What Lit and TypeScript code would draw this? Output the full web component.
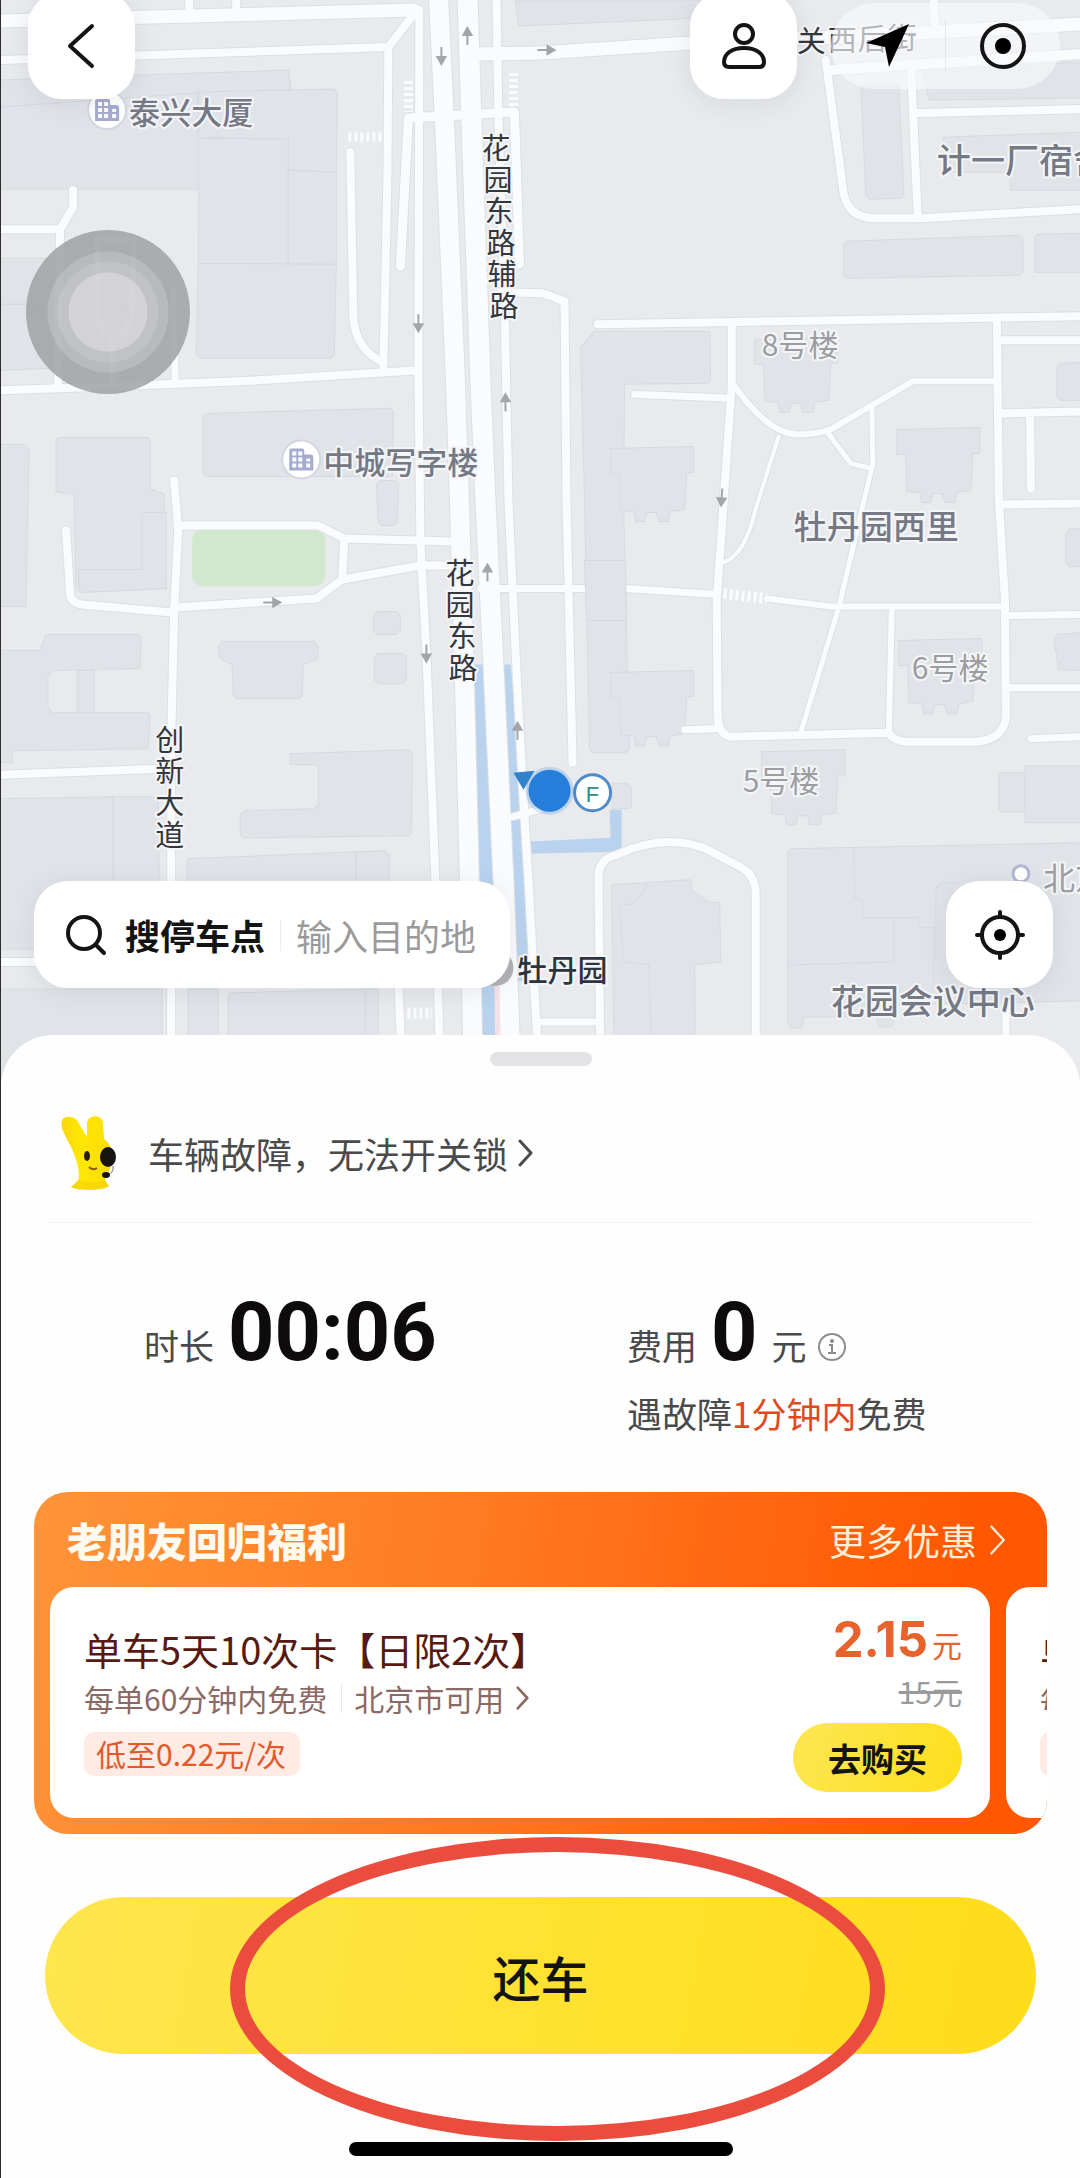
import { LitElement, css, html, svg } from 'lit'
import { customElement, property } from 'lit/decorators.js'

const TOWER = 'l83-2v26h-7l-2 37-14 2-2 10h-10l-2-9h-10l-2 9h-9l-2-10-13-1-1-37h-9z'

const buildings = [
  'M0 80L138 75L288 70L291 90L197 93L0 107z',
  'M0 107L197 93V189H0z',
  'M198 92L333 89L337 92L336 172L288 170V139L199 137z',
  'M199 138L288 139V264L198 263z',
  'M288 170L336 172V264H288z',
  'M198 263L336 264L334 354L331 358H200L196 354z',
  'M0 258H52V304H0z',
  'M0 304H52V368L0 370z',
  'M206 413L390 408L393 411L392 476H206L203 473V416z',
  'M0 444H24L29 449L26 606H0z',
  'M59 437H148L150 440V488L164 494L166 588L80 592L76 588L74 494L56 491V440z',
  'M166 512H142V569H78L80 592L166 588z',
  'M380 480H394L398 484L397 521L394 525H381L378 521L376 484z',
  'M0 650H40L46 634H138L141 638L140 668L52 670L48 675V706L52 712H148L150 716L148 748L12 750V762H0z',
  'M77 670H94V712H77z',
  'M222 641H314L318 646L317 658L303 664L302 695L299 698H236L233 695L232 664L220 658L218 646z',
  'M377 611H396L400 615V630L396 634H377L373 630V615z',
  'M377 653H402L406 657V679L402 683H378L374 679V657z',
  'M290 753L409 749L412 753L411 832L408 835L243 837L240 833V814L244 810L314 808L318 804V764H290z',
  'M0 798L113 796V948H0z',
  'M113 796H158L160 945H113z',
  'M187 858L356 851V945H187z',
  'M356 851L384 850L389 854L388 945H356z',
  'M0 988H162V1080H0z',
  'M188 988H218V1080H188z',
  'M230 992L365 988V1080H228V994z',
  'M365 988H378V1080H365z',
  'M515 0L518 26L700 18V0z',
  'M860 85H898L903 194L900 198L869 199L865 195z',
  'M922 70L1080 62V98L928 100z',
  'M942 137L1080 132V190H1010L1008 172H942z',
  'M846 241L1018 235L1022 238V272L1019 275L846 278L843 275V244z',
  'M1036 234L1080 233V272H1034V237z',
  'M580 347L594 331H709L710 379L707 383L624 384L623 500L625 590L627 680L629 748L625 752H592L589 748L584 500z',
  'M1060 363L1080 362V400H1060L1056 396V367z',
  'M1068 529L1080 528V566H1068L1065 562V533z',
  'M1056 634L1080 632V670L1058 669L1053 640z',
  'M998 772H1024V811H1000L998 808z',
  'M1024 765H1080V822H1024z',
  'M790 848L1080 842V1000L893 1004V1022L890 1026H878L876 1016H803L801 1027H790L787 1020V852z',
  'M611 884L690 879L691 889L708 901L719 902L720 961L694 964L695 1080H614z',
  'M612 783H626L631 787V806L628 808H612z',
  'M610 448' + TOWER,
  'M896 429' + TOWER,
  'M754 339' + TOWER,
  'M610 672' + TOWER,
  'M898 640' + TOWER,
  'M761 751' + TOWER,
]

const buildingLines = [
  'M853 848L854 898L862 899V917H917L918 926L933 927V985L930 990',
  'M787 964L893 961V918',
  'M646 882L642 893L632 903L619 904L623 961L648 964L652 1080',
  'M935 960V888L940 882H960',
]

// [path, width]
const roads: [string, number][] = [
  ['M189 0V14M236 0V12', 8],
  ['M0 21L413 10', 13],
  ['M0 60L388 47L412 16', 8],
  ['M388 48L387 180L383 370', 8],
  ['M0 390L60 388L240 381L418 370', 8],
  ['M350 152L353 318Q356 350 383 362', 8],
  ['M0 229H60L73 207V190M60 228L58 386', 8],
  ['M97 240H134L131 318Q125 338 113 338Q101 334 98 318zM113 338V384M173 288L175 380', 7],
  ['M419 10L418 370L420 540L426 653L435 880L440 1080', 8],
  ['M66 530L70 594Q71 602 82 604L172 612', 8],
  ['M174 480L178 530L174 610L171 740V1080', 8],
  ['M178 525H318L344 538L452 541M344 538L342 578', 8],
  ['M174 607L316 598L342 579L420 565H455', 8],
  ['M0 774L160 768M0 961H44', 8],
  ['M398 980L402 1080', 8],
  ['M470 54L540 53L690 43L860 36L1080 24', 13],
  ['M830 70L1080 54', 10],
  ['M825 60L833 120L843 194Q848 217 872 218L920 218L1080 209', 8],
  ['M910 65L917 218M917 113L1080 109', 8],
  ['M933 0L934 28', 8],
  ['M597 324L1080 316', 8],
  ['M500 292L542 293L564 301L566 500L572 762', 8],
  ['M731 326V385L721 530L716 600L717 716Q718 734 730 736L888 732Q892 740 905 741L976 741Q1004 738 1005 715L1004 600L998 500L996 320', 8],
  ['M734 386Q768 434 798 434Q815 434 830 429L912 381H994', 6],
  ['M778 436L755 508Q744 556 722 562', 4],
  ['M826 431L850 463L870 468M871 405L872 463L838 607L800 732', 5],
  ['M634 394L729 398', 7],
  ['M480 588L584 588M625 588L716 594', 7],
  ['M766 598L830 606H1002M891 607L888 732', 6],
  ['M684 729L716 728', 7],
  ['M1000 340H1080M1000 413L1080 411M1029 413L1030 488M1002 504L1080 503', 8],
  ['M1006 615L1080 614M1006 687H1080M1030 738L1080 736', 7],
  ['M600 1080L598 876Q598 858 616 854Q664 832 705 848L743 868Q755 876 755 893V1080', 8],
  ['M540 1021H600M1005 1005V1080', 7],
  ['M438 -5L444 120L455 380L459 500L464 680L469 880L473 1080', 19],
  ['M467 -5L471 120L480 380L485 500L493 665L503 880L511 1080', 20],
  ['M496 -5L498 120L504 300L508 500L515 650L523 800L528 880L539 1080', 8],
  ['M512 816L545 807', 7],
  ['M400 266L408 118L514 112L519 264', 9],
]

const arrows = [
  [467, 36, 0],
  [441, 56, 180],
  [546, 50, 90],
  [418, 323, 180],
  [505, 402, 0],
  [487, 572, 0],
  [426, 653, 180],
  [517, 730, 0],
  [272, 602, 90],
  [721, 497, 184],
]

const officePin = (x: number, y: number) => svg`
  <g transform="translate(${x} ${y})">
    <circle r="19" class="pin" />
    <path fill="#a6abd0" d="M-12 11V-9Q-12-11-10-11H1Q3-11 3-9V-5H9Q12-5 12-2V11z" />
    <path fill="#fff" d="M-9-8h4v4h-4zM-3-8h4v4h-4zM-9-2h4v4h-4zM-3-2h4v4h-4zM-9 4h4v4h-4zM-3 4h4v4h-4zM5-1h4v3h-4zM5 4h4v4h-4z" />
  </g>
`

const chevron = (size: number, width: number) => html`
  <svg width=${size / 2} height=${size} viewBox="0 0 15 30" aria-hidden="true">
    <path
      d="M2 3L13 15L2 27"
      fill="none"
      stroke="currentColor"
      stroke-width=${width}
      stroke-linecap="round"
      stroke-linejoin="round"
    />
  </svg>
`

@customElement('street-map')
export class StreetMap extends LitElement {
  render() {
    return html`
      <svg class="map" viewBox="0 0 1080 1080" preserveAspectRatio="xMidYMin slice">
        ${buildings.map((d) => svg`<path class="building" d=${d} />`)}
        ${buildingLines.map((d) => svg`<path class="edge" d=${d} />`)}
        <rect class="park" x="192" y="528" width="133" height="58" rx="12" />

        <path class="line" d="M474 664H486L500 880V1080H482L479 880L474 690z" />
        <path class="line" d="M500 664H510L514 700L521 770L526 900L530 980H512z" />
        <path class="line" d="M524 841L610 837L609 809H621V851L524 853z" />

        ${roads.map(([d, w]) => svg`<path class="casing" d=${d} stroke-width=${w + 2} />`)}
        ${roads.map(([d, w]) => svg`<path class="road" d=${d} stroke-width=${w} />`)}
        <path class="building" d="M584 560L625 560L626 620H586z" stroke="none" />
        <path class="steps" d="M408 81V112M513 73V106M348 137H386" />
        <path class="steps wide" d="M723 593L766 598M407 1012H432" />
        <path fill="#f5e1e8" d="M494 985H499L501 1080H495z" />

        ${arrows.map(
          ([x, y, r]) => svg`
            <path class="arrow" transform="translate(${x} ${y}) rotate(${r})" d="M0 9V-3M-4-1L0-8L4-1z" />
          `,
        )}

        ${officePin(107, 110)} ${officePin(301, 459)}
        <circle cx="495" cy="967" r="18" fill="#b3b3b5" />
        <circle cx="1020" cy="873" r="8" fill="#fff" stroke="#b3b7d4" stroke-width="3" />

        <text class="place" font-size="31" x="129" y="124">泰兴大厦</text>
        <text class="place" font-size="31" x="323" y="474">中城写字楼</text>
        <text class="place" font-size="33" x="793" y="539">牡丹园西里</text>
        <text class="place" font-size="34" x="936" y="173">计一厂宿舍</text>
        <text class="place" font-size="34" x="830" y="1013">花园会议中心</text>
        <text class="minor" font-size="30" x="761" y="356">8号楼</text>
        <text class="minor" font-size="30" x="742" y="791">5号楼</text>
        <text class="minor" font-size="30" x="911" y="678">6号楼</text>
        <text class="minor" font-size="32" x="1042" y="889">北京</text>
        <text class="station" font-size="30" x="517" y="980">牡丹园</text>
        <text class="street" font-size="29" x="796 827 857 887" y="52 51 50 49">关西后街</text>
        <text class="street" font-size="29" x="481 483 484 486 487 489" y="159 191 222 254 285 317">花园东路辅路</text>
        <text class="street" font-size="29" x="445 445 447 448" y="583 615 646 678">花园东路</text>
        <text class="street" font-size="29" x="155 155 155 155" y="750 781 813 845">创新大道</text>

        <circle cx="549" cy="790" r="24" fill="#1d7fe0" opacity="0.2" />
        <path fill="#3182cb" d="M513 772L534 770L523 789z" />
        <circle cx="549" cy="790" r="21" fill="#257fda" />
        <circle cx="592" cy="792" r="18" fill="#fff" stroke="#4f8bc9" stroke-width="3" />
        <text class="exit" x="592" y="801" font-size="22">F</text>
      </svg>
    `
  }

  static get styles() {
    return css`
      :host {
        display: block;
        background: #e8eaed;
      }
      .map {
        display: block;
        width: 100%;
        height: 100%;
      }
      text {
        font-family: 'Noto Sans CJK SC', sans-serif;
        paint-order: stroke;
        stroke: #f4f5f7;
        stroke-width: 4px;
        stroke-linejoin: round;
      }
      .building {
        fill: #e0e4e9;
        stroke: #d6dae0;
      }
      .edge {
        fill: none;
        stroke: #d6dae0;
      }
      .park {
        fill: #d1e8ce;
      }
      .casing,
      .road {
        fill: none;
        stroke-linejoin: round;
        stroke-linecap: round;
      }
      .casing {
        stroke: #dcdfe3;
      }
      .road {
        stroke: #fafbfd;
      }
      .steps {
        fill: none;
        stroke: #fafbfd;
        stroke-width: 9px;
        stroke-dasharray: 3 3;
      }
      .wide {
        stroke-width: 11px;
      }
      .line {
        fill: #b9d2ee;
      }
      .arrow {
        fill: #a3a5a8;
        stroke: #a3a5a8;
        stroke-width: 2px;
      }
      .pin {
        fill: #fff;
        stroke: #d3d6e2;
        stroke-width: 2px;
      }
      .place {
        fill: #747985;
        font-weight: 500;
      }
      .minor {
        fill: #9b9da2;
      }
      .station {
        fill: #2c3440;
        font-weight: 500;
      }
      .street {
        fill: #34373c;
      }
      .exit {
        fill: #2b8f8c;
        stroke: none;
        font-family: 'Liberation Sans', sans-serif;
        text-anchor: middle;
      }
    `
  }
}

@customElement('coupon-card')
export class CouponCard extends LitElement {
  @property() name = ''
  @property() rule = ''
  @property() area = ''
  @property() tag = ''
  @property() price = ''
  @property() origin = ''

  render() {
    return html`
      <div class="info">
        <div class="name">${this.name}</div>
        <div class="rule">
          <span>${this.rule}</span>
          ${this.area ? html`<a class="area" href="#area">${this.area}${chevron(26, 3)}</a>` : ''}
        </div>
        <div class="tag">${this.tag}</div>
      </div>
      ${this.price
        ? html`
            <div class="buy">
              <div class="price"><b>${this.price}</b>元</div>
              <s class="origin">${this.origin}元</s>
              <button class="button">去购买</button>
            </div>
          `
        : ''}
    `
  }

  static get styles() {
    return css`
      :host {
        display: flex;
        justify-content: space-between;
        box-sizing: border-box;
        min-height: 231px;
        padding: 29px 28px 26px 34px;
        border-radius: 24px;
        background: #fff;
        white-space: nowrap;
        font-size: 30px;
      }
      .info {
        display: flex;
        flex-direction: column;
        align-items: flex-start;
        padding-top: 8px;
      }
      .name {
        color: #561a12;
        font-size: 38px;
        line-height: 50px;
      }
      .rule {
        display: flex;
        align-items: center;
        margin-top: 4px;
        color: #8b6a63;
        line-height: 40px;
      }
      .area {
        display: flex;
        align-items: center;
        gap: 12px;
        margin-left: 14px;
        padding-left: 12px;
        border-left: 1px solid #ece6e4;
        color: inherit;
        line-height: 30px;
        text-decoration: none;
      }
      .tag {
        box-sizing: border-box;
        min-width: 28px;
        height: 44px;
        margin-top: 14px;
        padding: 0 14px 0 12px;
        border-radius: 10px;
        background: #ffeae4;
        color: #e05a2b;
        line-height: 42px;
      }
      .buy {
        display: flex;
        flex-direction: column;
        align-items: flex-end;
      }
      .price {
        height: 48px;
        color: #e8622b;
        line-height: 48px;
      }
      .price b {
        margin-right: 4px;
        font-family: Inter, sans-serif;
        font-size: 49px;
      }
      .origin {
        margin-top: 7px;
        color: #9a9a9a;
        line-height: 40px;
      }
      .button {
        height: 69px;
        margin-top: 12px;
        padding: 0 35px;
        border: none;
        border-radius: 35px;
        background: linear-gradient(110deg, #fde653, #fedf1c);
        color: #141414;
        font-family: inherit;
        font-weight: 700;
        font-size: 33px;
        line-height: 66px;
      }
    `
  }
}

@customElement('app-root')
export class AppRoot extends LitElement {
  render() {
    return html`
      <section class="area">
        <street-map class="canvas"></street-map>
        <div class="touch"></div>
        <div class="bar">
          <button class="square" aria-label="返回">
            <svg width="54" height="54" viewBox="0 0 54 54">
              <path class="stroke" stroke-width="5" d="M37 7L15 27L37 47" />
            </svg>
          </button>
          <div class="tools">
            <button class="square" aria-label="我的">
              <svg width="54" height="54" viewBox="0 0 54 54">
                <circle class="stroke" cx="27" cy="15" r="9" />
                <path
                  class="stroke"
                  d="M27 29C38 29 47 34 47 43Q47 48 42 48H12Q7 48 7 43C7 34 16 29 27 29z"
                />
              </svg>
            </button>
            <div class="capsule">
              <button class="plain" aria-label="导航">
                <svg width="54" height="54" viewBox="0 0 54 54">
                  <path d="M48 5L28 48L24 28L5 24z" />
                </svg>
              </button>
              <button class="plain" aria-label="关闭">
                <svg width="54" height="54" viewBox="0 0 54 54">
                  <circle class="stroke" cx="27" cy="27" r="21" />
                  <circle cx="27" cy="27" r="8" />
                </svg>
              </button>
            </div>
          </div>
        </div>
        <div class="bar">
          <div class="search">
            <button class="spot">
              <svg width="42" height="42" viewBox="0 0 42 42" aria-hidden="true">
                <circle class="stroke" cx="19" cy="19" r="16" />
                <path class="stroke" d="M31 31L39 39" />
              </svg>
              搜停车点
            </button>
            <span class="split"></span>
            <input class="input" aria-label="输入目的地" placeholder="输入目的地" />
          </div>
          <button class="square" aria-label="定位">
            <svg width="54" height="54" viewBox="0 0 54 54">
              <circle class="stroke" cx="27" cy="27" r="18" />
              <circle cx="27" cy="27" r="6" />
              <path class="stroke" d="M27 4V9M27 45V50M4 27H9M45 27H50" />
            </svg>
          </button>
        </div>
      </section>

      <section class="sheet">
        <div class="handle"></div>

        <a class="support" href="#support">
          <svg width="56" height="76" viewBox="0 0 56 76" aria-hidden="true">
            <defs>
              <linearGradient id="skin" x1="0" x2="1">
                <stop offset="0" stop-color="#f8d80c" />
                <stop offset="0.4" stop-color="#ffe704" />
                <stop offset="1" stop-color="#fbdc08" />
              </linearGradient>
            </defs>
            <path
              fill="url(#skin)"
              d="M2 13C0 5 4 1 10 2C16 2 18 6 21 12L27 22L27 8C28-1 43-1 43 9L44 24C51 29 53 37 52 45C51 55 46 60 45 65L49 71C42 76 18 76 11 72C15 68 19 67 19 62C19 53 17 46 12 34C8 25 4 20 2 13z"
            />
            <path fill="#f4cc06" opacity="0.5" d="M18 65Q31 69 45 66L49 71C42 76 18 76 11 72z" />
            <ellipse cx="27" cy="41" rx="3" ry="5" fill="#2b1d05" />
            <ellipse cx="48" cy="42" rx="8" ry="10" fill="#171412" />
            <path d="M29 52Q33 56 37 53" fill="none" stroke="#8a5a00" stroke-width="2" />
            <path d="M53 51Q54 59 46 60" fill="none" stroke="#77756c" stroke-width="1" />
            <ellipse cx="46" cy="60" rx="4" ry="3" fill="#171412" />
          </svg>
          <span class="question">车辆故障，无法开关锁</span>
          ${chevron(30, 3)}
        </a>

        <div class="stats">
          <div class="stat">时长<b class="number">00:06</b></div>
          <div>
            <div class="stat">
              费用<b class="number">0</b>元
              <svg class="tip" width="30" height="30" viewBox="0 0 30 30" aria-hidden="true">
                <circle cx="15" cy="15" r="13" fill="none" stroke="currentColor" stroke-width="2" />
                <path d="M12 13H15V21M11 21H19" fill="none" stroke="currentColor" stroke-width="2" />
                <circle cx="15" cy="9" r="2" fill="currentColor" />
              </svg>
            </div>
            <div class="note">遇故障<em>1分钟内</em>免费</div>
          </div>
        </div>

        <div class="promo">
          <div class="head">
            <h2 class="title">老朋友回归福利</h2>
            <a class="more" href="#more">更多优惠${chevron(34, 2)}</a>
          </div>
          <div class="coupons">
            <coupon-card
              class="coupon"
              name="单车5天10次卡【日限2次】"
              rule="每单60分钟内免费"
              area="北京市可用"
              tag="低至0.22元/次"
              price="2.15"
              origin="15"
            ></coupon-card>
            <coupon-card class="coupon" name="单" rule="每"></coupon-card>
          </div>
        </div>

        <div class="action">
          <button class="return">还车</button>
          <div class="ring"></div>
        </div>
        <div class="home"></div>
      </section>
    `
  }

  static get styles() {
    return css`
      :host {
        display: flex;
        flex-direction: column;
        box-sizing: border-box;
        min-height: 100vh;
        border-left: 1px solid #2d2d30;
        background: #fefefe;
        color: #4a4a4a;
        font-family: 'Noto Sans CJK SC', sans-serif;
        font-size: 35px;
        overflow: hidden;
      }
      button {
        border: none;
        color: #141414;
        font-family: inherit;
        cursor: pointer;
      }
      svg {
        flex: none;
      }
      .area {
        position: relative;
        display: flex;
        flex: 1;
        flex-direction: column;
        justify-content: space-between;
        min-height: 600px;
        box-sizing: border-box;
        padding-bottom: 93px;
      }
      .canvas {
        position: absolute;
        inset: 0;
      }
      .touch {
        position: absolute;
        top: 230px;
        left: 25px;
        width: 164px;
        height: 164px;
        border-radius: 50%;
        background: radial-gradient(
          circle,
          rgba(208, 208, 210, 0.88) 39px,
          rgba(186, 187, 188, 0.85) 40px,
          rgba(186, 187, 188, 0.85) 50px,
          rgba(176, 177, 179, 0.85) 51px,
          rgba(176, 177, 179, 0.85) 60px,
          rgba(160, 161, 164, 0.85) 61px
        );
      }
      .bar {
        position: relative;
        display: flex;
        justify-content: space-between;
        align-items: center;
        margin: 0 27px 0 33px;
      }
      .bar:nth-child(3) {
        margin: -8px 20px 0 27px;
      }
      .tools {
        display: flex;
        align-items: center;
        gap: 34px;
      }
      .square {
        display: flex;
        justify-content: center;
        align-items: center;
        width: 107px;
        height: 107px;
        padding: 0;
        border-radius: 34px;
        background: #fff;
        box-shadow: 0 4px 24px rgba(60, 70, 90, 0.1);
      }
      .stroke {
        fill: none;
        stroke: #141414;
        stroke-width: 4px;
        stroke-linecap: round;
        stroke-linejoin: round;
      }
      .capsule {
        display: flex;
        width: 229px;
        height: 86px;
        border-radius: 43px;
        background: rgba(248, 249, 252, 0.65);
      }
      .plain {
        display: flex;
        flex: 1;
        justify-content: center;
        align-items: center;
        margin: 16px 0;
        padding: 0;
        background: none;
      }
      .plain + .plain {
        border-left: 1px solid #e6e7ea;
      }
      .search {
        display: flex;
        align-items: center;
        width: 476px;
        height: 107px;
        box-sizing: border-box;
        padding: 0 20px 0 31px;
        border-radius: 34px;
        background: #fff;
        box-shadow: 0 4px 24px rgba(60, 70, 90, 0.1);
      }
      .spot {
        display: flex;
        align-items: center;
        gap: 18px;
        padding: 0;
        background: none;
        font-weight: 700;
        font-size: 35px;
        line-height: 52px;
        white-space: nowrap;
      }
      .split {
        width: 1px;
        height: 32px;
        margin: 0 15px;
        background: #ececec;
      }
      .input {
        flex: 1;
        min-width: 0;
        height: 52px;
        padding: 0;
        border: none;
        outline: none;
        background: none;
        font-family: inherit;
        font-size: 36px;
      }
      .input::placeholder {
        color: #9a9a9a;
      }
      .sheet {
        position: relative;
        display: flex;
        flex-direction: column;
        margin-top: -46px;
        padding: 17px 0 22px;
        border-radius: 52px 52px 0 0;
        background: #fefefe;
      }
      .handle {
        width: 102px;
        height: 14px;
        margin: 0 auto;
        border-radius: 7px;
        background: #e3e3e6;
      }
      .support {
        display: flex;
        align-items: center;
        margin: 49px 42px 0 47px;
        padding: 0 0 31px 12px;
        border-bottom: 1px solid #f5f5f5;
        color: inherit;
        text-decoration: none;
      }
      .question {
        margin: 0 10px 0 32px;
        font-size: 36px;
        line-height: 50px;
      }
      .stats {
        display: grid;
        grid-template-columns: 16fr 15fr;
        padding: 68px 0 0 143px;
      }
      .stat {
        display: flex;
        align-items: baseline;
        height: 84px;
        line-height: 84px;
      }
      .number {
        margin: 0 14px;
        color: #0d0b0c;
        font-family: Roboto, sans-serif;
        font-size: 81px;
      }
      .tip {
        align-self: flex-end;
        margin: 0 0 13px 10px;
        color: #8c8c8c;
      }
      .note {
        margin-top: 14px;
        line-height: 48px;
      }
      .note em {
        color: #e0491f;
        font-style: normal;
      }
      .promo {
        margin: 55px 33px 0;
        padding-bottom: 16px;
        border-radius: 34px;
        background: linear-gradient(100deg, #ff9438, #ff7a22 42%, #ff5800 88%);
        overflow: hidden;
      }
      .head {
        display: flex;
        justify-content: space-between;
        align-items: center;
        height: 95px;
        padding: 0 41px 0 33px;
      }
      .title {
        margin: 0;
        color: #fffaf0;
        font-weight: 900;
        font-size: 40px;
      }
      .more {
        display: flex;
        align-items: center;
        gap: 12px;
        color: #ffeed8;
        font-size: 37px;
        text-decoration: none;
      }
      .coupons {
        display: flex;
        gap: 16px;
        margin-left: 16px;
      }
      .coupon {
        flex: none;
        width: calc(100% - 57px);
      }
      .action {
        position: relative;
        margin: 63px 44px 0;
      }
      .return {
        display: block;
        width: 100%;
        height: 157px;
        border-radius: 79px;
        background: linear-gradient(100deg, #ffe54f, #ffe12c 60%, #ffdc1a);
        font-weight: 500;
        font-size: 48px;
      }
      .ring {
        position: absolute;
        top: -60px;
        right: 151px;
        bottom: -87px;
        left: 185px;
        border: 15px solid #ea4d3e;
        border-radius: 50%;
        box-sizing: border-box;
        pointer-events: none;
      }
      .home {
        width: 384px;
        height: 14px;
        margin: 88px auto 0;
        border-radius: 7px;
        background: #000;
      }
    `
  }
}
